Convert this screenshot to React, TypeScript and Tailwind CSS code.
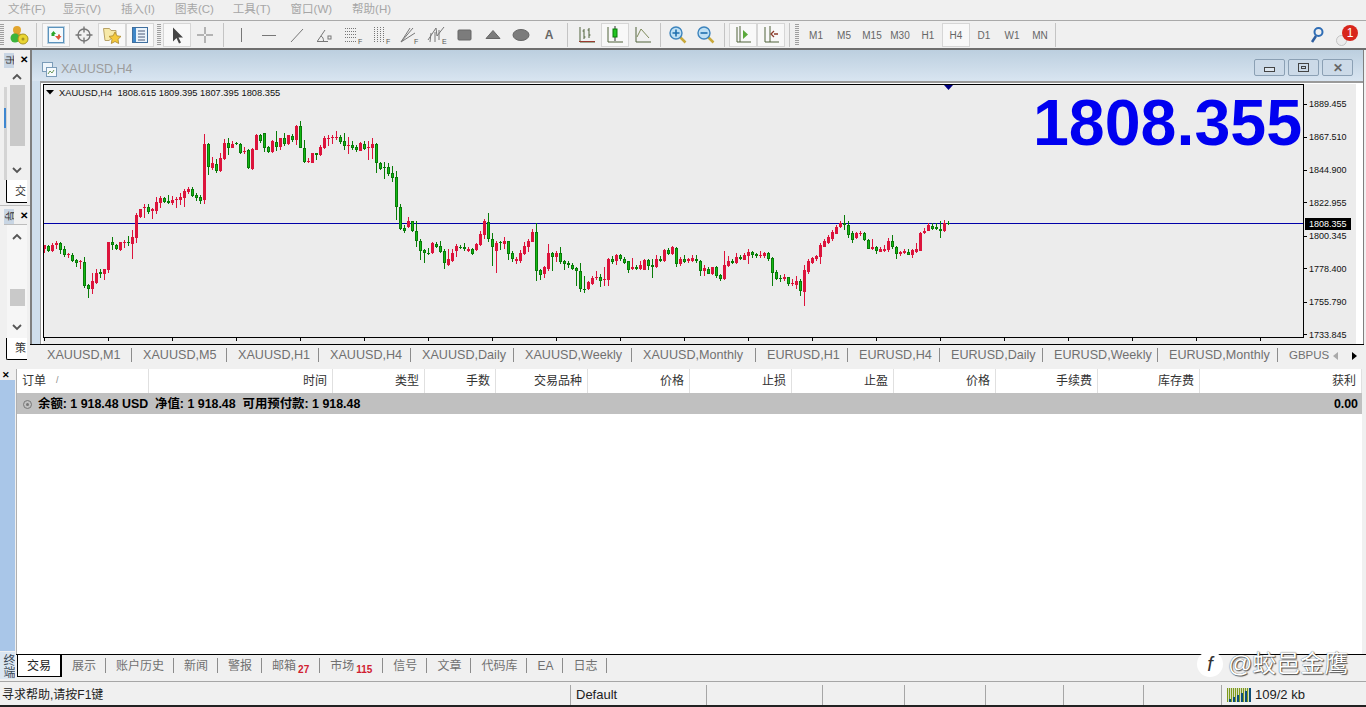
import type { ReactNode } from "react";

type C = [string, number, number, number, number];

// candle data read off the chart: colour, body top, body bottom, high, low (zoomed y, origin + y/3)
const seg1: C[] = [["r",406,418,404,428],["g",408,424,406,426],["r",404,424,400,428],["r",400,406,394,418],["g",398,420,396,432],["g",416,436,408,440],["r",432,436,428,444],["g",436,452,428,456],["g",450,458,446,470],["r",454,456,450,476],["g",456,528,442,534],["g",526,536,522,564],["r",514,536,490,552],["r",488,518,476,520],["g",486,492,476,504],["r",478,492,476,510],["r",396,480,396,490],["g",396,406,382,420],["g",406,418,402,420],["r",396,420,396,424],["r",396,398,390,414],["g",396,400,378,408],["r",382,402,360,446],["r",314,384,310,400],["r",298,320,296,322],["r",292,294,282,324],["g",292,306,282,312],["r",298,304,294,326],["r",276,302,262,314],["r",264,280,258,294],["g",264,276,260,278],["g",274,278,256,284],["r",270,280,258,286],["r",268,270,260,294],["r",260,270,248,284],["r",242,264,236,290],["r",236,246,230,250],["g",236,258,232,262],["g",254,264,250,274],["g",260,272,254,280],["r",102,270,72,282],["g",102,172,98,194],["r",160,174,142,182],["g",162,182,146,188],["r",144,184,130,186],["r",98,148,88,150],["g",98,114,84,134],["r",102,114,94,116],["g",100,102,96,104],
["g",102,128,98,130],["r",122,124,112,132],["g",120,174,116,176],["r",116,176,114,180],["r",74,120,72,120],["g",76,94,72,100],["g",70,114,68,124],["g",112,126,108,128],["r",94,126,90,128],["g",96,110,62,122],["r",84,110,84,120],["g",84,102,70,108],["r",76,102,74,104],["g",78,90,72,96],["r",48,90,44,104],["g",48,114,34,116],["g",114,156,90,158],["r",152,154,144,160],["r",130,158,128,158],["g",130,134,130,150],["r",110,136,104,138],["r",84,114,78,116],["r",84,86,76,108],["r",80,84,76,102],["r",82,84,64,90],["g",82,96,76,102],["g",94,108,68,120],["r",106,108,82,134],["g",106,114,94,122],["g",110,120,104,126],["r",100,122,96,124],["g",102,118,92,120],["r",110,114,92,150],["r",102,114,84,148],["g",102,160,98,188],["g",160,178,156,180],["g",170,174,156,206],["g",172,192,158,198],["g",190,204,168,216],["g",202,292,184,330],["g",292,356,282,360],["g",354,362,346,370],["r",334,352,322,354],["g",334,362,332,366],["g",362,394,334,412],["g",394,422,388,450],["g",420,428,416,458],["g",428,430,414,434],["r",400,430,396,432],["g",402,410,396,414]];
const seg2: C[] = [["g",468,486,454,490],["g",482,518,478,538],["r",508,524,478,530],["r",490,512,478,516],["r",468,484,462,500]];
const seg3: C[] = [["g",170,174,166,178],["g",172,178,160,184],["r",176,182,172,186],["g",178,192,174,194],["r",162,180,158,182],["r",132,164,122,166],["r",94,134,88,148],["g",96,146,68,156],["g",146,170,128,228],["r",158,182,154,250],["g",156,158,152,180],["r",152,162,142,178],["g",154,192,152,210],["g",188,208,184,218],["r",206,212,202,224],["r",188,214,180,218],["r",168,192,156,194],["r",152,172,146,186],["r",126,156,118,158],["g",126,242,100,274],["g",240,256,236,270],["r",232,252,228,264],["r",190,238,162,242],["g",190,200,186,244],["r",188,202,182,214],["g",188,216,170,220],["g",214,222,210,240],["g",220,226,212,232],["g",224,236,220,240],["g",234,244,230,288],["g",242,298,218,304],["g",296,298,258,308],["r",276,298,272,300],["r",264,282,258,286],["r",262,264,242,270],["g",262,272,252,290],["r",266,270,232,288],["r",206,270,204,288],["g",206,216,198,222],["r",196,212,192,224],["g",196,208,192,212],["g",206,218,200,222],["g",214,240,212,248],["r",232,238,204,240],["g",232,236,226,240],["r",226,238,212,240],["r",210,240,208,242],["g",210,228,206,240],["g",226,230,206,264],["r",206,232,194,234],["g",208,212,198,216],["r",180,212,178,216],["g",180,192,174,196],["r",172,192,168,196],["g",174,222,170,230],["r",206,222,200,226],["g",208,216,196,220],["r",208,214,204,218],["r",204,212,194,216],["g",208,214,196,220],["g",212,242,210,258],["r",234,242,224,256],["g",236,252,232,254],["r",232,252,230,254],["g",232,258,228,264],["g",256,268,252,274],["r",226,268,182,270],["r",214,228,198,232],["g",212,218,208,222],["r",202,218,190,222],["g",200,208,196,212],["r",194,210,190,212],["r",186,198,176,220],["g",186,196,182,202],["g",192,198,188,202],["r",194,198,184,206],["r",190,198,186,204],["g",190,206,186,212],["g",204,248,200,288],["g",246,266,240,270],["g",264,268,254,274],["r",260,266,252,274],["g",262,282,260,286],["r",278,282,268,288],["r",272,284,258,296],["g",272,304,268,318],["r",240,306,224,348],["r",214,246,206,250],["r",204,220,202,224],["r",198,206,194,212],["r",164,202,158,220],["r",152,170,148,172],["r",140,160,136,162],["r",126,148,120,152],["r",110,132,106,134],["r",100,112,94,114],["g",100,104,74,118],["g",104,134,94,146],["g",128,150,122,158],["r",130,144,126,148],["r",128,132,122,138],["g",128,150,126,154],["g",150,176,148,178],["r",170,176,148,180],["g",170,182,168,192],["r",176,186,172,188],["r",178,182,166,188],["r",152,180,144,186],["g",154,172,134,176],["g",170,192,168,208],["r",186,192,182,198],["r",184,188,178,192],["g",186,194,178,196],["r",180,194,176,204],["r",178,186,160,190],["r",128,182,126,184],["r",122,130,114,132],["r",106,122,100,124],["g",108,116,100,122],["g",110,118,100,120],["g",116,122,94,144],["r",98,124,90,126],["g",98,100,94,106]];

const candles: C[] = [
  ...seg1.map((c) => scale(c, 110)),
  ...seg2.map((c) => scale(c, 90)),
  ...seg3.map((c) => scale(c, 190)),
];

function scale(c: C, o: number): C {
  return [c[0], o + c[1] / 3, o + c[2] / 3, o + c[3] / 3, o + c[4] / 3];
}

const prices: [string, number][] = [["1889.455",103.5],["1867.510",136.5],["1844.900",169.5],["1822.955",202],["1800.345",235.5],["1778.400",268],["1755.790",301.5],["1733.845",334]];

function Chart() {
  const ticks = [];
  for (let x = 44; x < 1304; x += 64) ticks.push(x);
  return (
    <svg width={1313} height={260} viewBox="43 84 1313 260" shapeRendering="crispEdges" className="block">
      <rect x={43} y={84} width={1313} height={260} fill="#ececec" />
      <line x1={44} y1={223.5} x2={1304} y2={223.5} stroke="#0000a8" />
      {candles.map((c, i) => {
        const x = 44 + i * 4;
        const red = c[0] === "r";
        const h = Math.max(1, Math.round(c[2]) - Math.round(c[1]));
        return (
          <g key={i}>
            <rect x={x} y={Math.round(c[3])} width={1} height={Math.max(1, Math.round(c[4] - c[3]))} fill={red ? "#dc143c" : "#087c08"} />
            <rect x={x - 1} y={Math.round(c[1])} width={3} height={h} fill={red ? "#dc143c" : "#087c08"} />
            {!red && h > 2 && <rect x={x} y={Math.round(c[1]) + 1} width={1} height={h - 2} fill="#14b814" />}
          </g>
        );
      })}
      <rect x={43.5} y={84.5} width={1260} height={253} fill="none" stroke="#000" />
      {ticks.map((x) => <line key={x} x1={x + 0.5} y1={338} x2={x + 0.5} y2={341} stroke="#000" />)}
      {prices.map(([p, y]) => <line key={p} x1={1304} y1={Math.round(y) + 0.5} x2={1307} y2={Math.round(y) + 0.5} stroke="#000" />)}
      <path d="M944 85h9l-4.500 5z" fill="#000080" shapeRendering="auto" />
      <path d="M46 90h8l-4 4.500z" fill="#000" shapeRendering="auto" />
      <g fontFamily="'Liberation Sans',sans-serif" fontSize={9} fill="#111" shapeRendering="auto">
        <text x={59} y={95.500} fontSize={9.3} xmlSpace="preserve">XAUUSD,H4  1808.615 1809.395 1807.395 1808.355</text>
        {prices.map(([p, y]) => <text key={p} x={1309} y={y + 3.500}>{p}</text>)}
        <rect x={1305} y={218} width={46} height={12} fill="#000" />
        <text x={1309} y={227} fill="#fff">1808.355</text>
      </g>
    </svg>
  );
}

const G = ({ children, w = 20 }: { children: ReactNode; w?: number }) => (
  <svg width={w} height={20} viewBox="0 0 20 20" fill="none">{children}</svg>
);
const L = "#777";

function FLabel({ t }: { t: string }) {
  return <text x={15} y={19} fontSize={7} fill="#555" fontFamily="'Liberation Sans',sans-serif">{t}</text>;
}

const toolIcons: Record<string, ReactNode> = {
  chart: (
    <G>
      <rect x={2.500} y={2.500} width={15} height={15} fill="#f4fafd" stroke="#5b93bd" />
      <rect x={1.500} y={1.500} width={17} height={17} stroke="#b9cfdf" />
      <path d="M5 9l2.500-3L10 9H8.500v2h-3V9z" fill="#2aa52a" />
      <path d="M9 11h3V9.500h2V11h1.500L12.500 15z" fill="#e0563c" />
    </G>
  ),
  target: (
    <G>
      <circle cx={10} cy={10} r={6} stroke={L} strokeWidth={1.400} />
      <path d="M10 1.500v6M10 12.500v6M1.500 10h6M12.500 10h6" stroke={L} strokeWidth={1.400} />
    </G>
  ),
  star: (
    <G>
      <path d="M1.500 3.500h6l1.500 2h5v4l-7 6h-4z" fill="#f7e9a8" stroke="#b8a266" />
      <path d="M13 7l1.900 3.800 4.100.6-3 2.900.7 4.200-3.700-2-3.700 2 .7-4.200-3-2.900 4.100-.6z" fill="#f5c93c" stroke="#a9862a" strokeWidth={0.800} />
    </G>
  ),
  nav: (
    <G>
      <rect x={2.500} y={2.500} width={15} height={15} fill="#eaf3fb" stroke="#3f6f9f" />
      <rect x={3} y={3} width={3} height={14} fill="#3f87c8" />
      <path d="M8 6h7M8 9h7M8 12h7M8 15h7" stroke="#4c5a78" />
    </G>
  ),
  cursor: <G><path d="M6 2.500v14l3.500-3.500 2.500 5.500 2-1-2.500-5H16z" fill="#444" /></G>,
  cross: <G><path d="M10 2v7M10 11v7M2 10h7M11 10h7" stroke={L} /></G>,
  vline: <G><path d="M10.500 3v14" stroke={L} /></G>,
  hline: <G><path d="M3 10.500h14" stroke={L} /></G>,
  tline: <G><path d="M4 17L16 4" stroke={L} /></G>,
  angle: <G><path d="M2 16.500h11M2.500 16L10 5M6 11c2 1 2.500 3 2.500 5" stroke={L} /><rect x={13} y={11} width={3} height={3} stroke={L} /></G>,
  hfib: <G><path d="M2 3.500h11M2 6.500h11M2 9.500h11M2 12.500h11M2 16.500h11" stroke={L} strokeDasharray="1 1" /><FLabel t="F" /></G>,
  vfib: <G><path d="M3.500 2v15M6.500 2v15M9.500 2v15M12.500 2v15" stroke={L} strokeDasharray="1 1" /><FLabel t="F" /></G>,
  fan: <G><path d="M2 17L14 3M2 17l9-14M2 17l14-9" stroke={L} /><FLabel t="F" /></G>,
  elliot: <G><path d="M1 15L9 3l1 8 7-9M3 17L4 8M8 17V7M12 15V5" stroke={L} /><FLabel t="E" /></G>,
  rect: <G><rect x={3} y={5} width={13} height={10} rx={1} fill="#7c7c7c" stroke="#666" /></G>,
  tri: <G><path d="M10 5.500l7 8H3z" fill="#7c7c7c" stroke="#666" /></G>,
  ellipse: <G><ellipse cx={10} cy={10} rx={8} ry={5.500} fill="#7c7c7c" stroke="#666" /></G>,
  text: <span className="text-[12px] font-bold text-[#666]">A</span>,
  bars: <G><path d="M3 2v15h15M7 4v10M5.500 6H7M7 12h1.500M12 3v10M10.500 5H12M12 10h1.500" stroke="#50623a" /><path d="M2 16.500h16" stroke="#9a3b2f" /></G>,
  candle: <G><path d="M3 2v15h15" stroke="#50623a" /><path d="M10 1v15" stroke="#333" /><rect x={8} y={4} width={4} height={8} fill="#22c422" stroke="#0a7a0a" /></G>,
  line: <G><path d="M3 2v15h15" stroke="#50623a" /><path d="M4 12l4-8 8 9" stroke="#7e8a5a" /></G>,
  zin: (
    <G>
      <path d="M12 12l5.500 5.500" stroke="#c9a93a" strokeWidth={2.500} />
      <circle cx={8} cy={8} r={6} fill="#bfe0f4" stroke="#3d84bd" strokeWidth={1.400} />
      <path d="M8 4.500v7M4.500 8h7" stroke="#1f6fae" strokeWidth={1.600} />
    </G>
  ),
  zout: (
    <G>
      <path d="M12 12l5.500 5.500" stroke="#c9a93a" strokeWidth={2.500} />
      <circle cx={8} cy={8} r={6} fill="#bfe0f4" stroke="#3d84bd" strokeWidth={1.400} />
      <path d="M4.500 8h7" stroke="#1f6fae" strokeWidth={1.600} />
    </G>
  ),
  shift: <G><path d="M4 2v15h14" stroke="#50623a" /><path d="M7 1v16" stroke="#50623a" /><path d="M10 5l5 4.500-5 4.500z" fill="#5aa83a" /></G>,
  autos: <G><path d="M4 2v15h14" stroke="#50623a" /><path d="M9 1v16" stroke="#50623a" /><path d="M17 9h-4M13 6l-3 3 3 3" stroke="#8a3b2a" strokeWidth={1.300} /></G>,
};

function Tool({ icon, on }: { icon: string; on?: boolean }) {
  return (
    <div className={on ? "flex h-[24px] w-[28px] items-center justify-center border border-[#d6d6d6] bg-[#f8f8f8]" : "flex h-[24px] w-[28px] items-center justify-center"}>
      {toolIcons[icon]}
    </div>
  );
}

const Sep = () => <div className="h-[24px] w-px bg-[#c4c4c4]" />;
const Grip = () => <div className="h-[22px] w-[4px] bg-[repeating-linear-gradient(#9f9f9f_0_1px,#f0f0f0_1px_2px)]" />;

function Menu() {
  const items = [["文件(F)", "ml-[8px]"], ["显示(V)", "ml-[17px]"], ["插入(I)", "ml-[20px]"], ["图表(C)", "ml-[20px]"], ["工具(T)", "ml-[19px]"], ["窗口(W)", "ml-[20px]"], ["帮助(H)", "ml-[20px]"]];
  return (
    <div className="flex h-[21px] items-center border-b border-[#a9a9a9] pb-[1px] text-[11.5px] text-[#a6a6a6]">
      {items.map(([t, c]) => <span key={t} className={c}>{t}</span>)}
    </div>
  );
}

function Toolbar() {
  const periods = ["M1", "M5", "M15", "M30", "H1", "H4", "D1", "W1", "MN"];
  return (
    <div className="flex h-[27px] items-center pt-[1px]">
      <div className="mr-[1px]"><Grip /></div>
      <div className="flex w-[28px] items-center justify-center">
        <svg width={22} height={22} viewBox="0 0 22 22">
          <circle cx={9} cy={6} r={4} fill="#e2a52e" />
          <path d="M3 15c0-5 3-6 6-6s6 1 6 6z" fill="#d49a26" />
          <circle cx={7} cy={14} r={4.500} fill="#3cb43c" />
          <circle cx={15} cy={15} r={5} fill="#e9d532" stroke="#a89420" />
          <circle cx={15} cy={15} r={1.500} fill="#a89420" />
        </svg>
      </div>
      <div className="ml-[3px] mr-[5px]"><Sep /></div>
      <Tool icon="chart" on /><Tool icon="target" /><Tool icon="star" on /><Tool icon="nav" on />
      <div className="ml-[3px] mr-[2px]"><Grip /></div>
      <Tool icon="cursor" on /><Tool icon="cross" />
      <div className="ml-[4px] mr-[3px]"><Sep /></div>
      {["vline", "hline", "tline", "angle", "hfib", "vfib", "fan", "elliot", "rect", "tri", "ellipse", "text"].map((k) => <Tool key={k} icon={k} />)}
      <div className="ml-[4px] mr-[5px]"><Sep /></div>
      <Tool icon="bars" /><Tool icon="candle" on /><Tool icon="line" />
      <div className="ml-[3px] mr-[3px]"><Sep /></div>
      <Tool icon="zin" /><Tool icon="zout" />
      <div className="ml-[4px] mr-[4px]"><Sep /></div>
      <Tool icon="shift" on /><Tool icon="autos" on />
      <div className="ml-[4px] mr-[5px]"><Sep /></div>
      <Grip />
      <div className="w-[3px]" />
      {periods.map((p) => (
        <div key={p} className={p === "H4" ? "flex h-[24px] w-[28px] items-center justify-center border border-[#d6d6d6] bg-[#f8f8f8] text-[10px] text-[#666]" : "flex h-[24px] w-[28px] items-center justify-center text-[10px] text-[#666]"}>{p}</div>
      ))}
      <div className="ml-[1px]"><Sep /></div>
      <div className="flex-1" />
      <svg width={16} height={18} viewBox="0 0 16 18" fill="none" className="mr-[11px]">
        <circle cx={9.500} cy={6} r={4} stroke="#2f6db5" strokeWidth={2} />
        <path d="M7 10l-4 6" stroke="#2f5f9f" strokeWidth={2.500} />
      </svg>
      <div className="relative mr-[8px] h-[22px] w-[22px]">
        <div className="absolute bottom-0 left-0 h-[11px] w-[11px] rounded-full border border-[#c4c4c4] bg-[#ececec]" />
        <div className="absolute right-0 top-[1px] flex h-[16px] w-[16px] items-center justify-center rounded-full bg-[#d8261c] text-[12px] leading-none text-white">1</div>
      </div>
    </div>
  );
}

const Chevron = ({ up }: { up?: boolean }) => (
  <svg width={10} height={7} viewBox="0 0 10 7" fill="none">
    <path d={up ? "M1 6l4-4 4 4" : "M1 1l4 4 4-4"} stroke="#555" strokeWidth={1.800} />
  </svg>
);

function DockHead({ t }: { t: string }) {
  return (
    <div className="flex h-[16px] items-center pl-[4px]">
      <span className="flex h-[15px] w-[10px] items-center justify-center overflow-hidden bg-[#c9d6e4] text-[10px] leading-none text-[#333]"><span className="rotate-90">{t}</span></span>
      <span className="ml-[6px] text-[10px] font-bold leading-none text-black">✕</span>
    </div>
  );
}

function Docks() {
  return (
    <div className="flex w-[30px] flex-col pt-[2px]">
      <DockHead t="市" />
      <div className="ml-[4px] flex h-[112px] w-[23px]">
        <div className="mt-[19px] h-[93px] w-[3px] bg-[#d4d4d4]"><div className="mt-[21px] h-[20px] w-[2px] bg-[#3f87d0]" /></div>
        <div className="flex flex-1 flex-col items-center">
          <div className="mt-[5px]"><Chevron up /></div>
          <div className="mt-[5px] h-[61px] w-[15px] bg-[#c9c9c9]" />
          <div className="mt-[21px]"><Chevron /></div>
        </div>
      </div>
      <div className="ml-[6px] h-[23px] w-[21px] rounded-bl-[2px] border-b border-l border-black bg-white pl-[8px] pt-[4px] text-[11px] leading-[14px] text-[#333]">交</div>
      <div className="h-[2px]" />
      <div className="h-[1px] bg-[#bdbdbd]" />
      <div className="h-[2px]" />
      <DockHead t="导" />
      <div className="ml-[4px] flex h-[114px] w-[23px] border-t border-[#bdbdbd]">
        <div className="w-[3px] bg-[#f0f0f0]" />
        <div className="flex flex-1 flex-col items-center bg-[#f6f6f6]">
          <div className="mt-[8px]"><Chevron up /></div>
          <div className="mt-[49px] h-[17px] w-[15px] bg-[#c9c9c9]" />
          <div className="mt-[18px]"><Chevron /></div>
        </div>
      </div>
      <div className="ml-[6px] h-[22px] w-[21px] rounded-bl-[2px] border-b border-l border-black bg-white pl-[8px] pt-[3px] text-[11px] leading-[14px] text-[#333]">策</div>
    </div>
  );
}

function WinBtn({ children }: { children: ReactNode }) {
  return <div className="flex h-[17px] w-[31px] items-center justify-center rounded-[2px] border border-[#8ba0b4] bg-[#ccdae8]">{children}</div>;
}

function ChartWindow() {
  return (
    <div className="flex h-[294px] flex-col border-l-2 border-r border-t-0 border-[#7f7f7f] bg-[#cfdeec]">
      <div className="flex h-[31px] items-center bg-linear-to-b from-[#bccfdf] to-[#d9e5f1] pl-[10px]">
        <svg width={15} height={15} viewBox="0 0 15 15" fill="none" className="mt-[7px]">
          <rect x={0.500} y={0.500} width={10} height={9} fill="#eef5fb" stroke="#7b9cb8" />
          <rect x={4.500} y={5.500} width={10} height={9} fill="#f6fafd" stroke="#7b9cb8" />
          <path d="M6 12l2-3 2 2 2-3" stroke="#6f9a5a" />
        </svg>
        <span className="ml-[4px] mt-[8px] text-[12.5px] text-[#9c9c9c]">XAUUSD,H4</span>
        <div className="flex-1" />
        <div className="mr-[10px] mt-[4px] flex gap-[3px]">
          <WinBtn><div className="mt-[4px] h-[5px] w-[11px] border border-[#444] bg-[#dde6ef]" /></WinBtn>
          <WinBtn><div className="flex h-[9px] w-[11px] items-center justify-center border border-[#444]"><div className="h-[3px] w-[5px] border border-[#444]" /></div></WinBtn>
          <WinBtn><span className="text-[12px] font-bold leading-none text-[#666]">✕</span></WinBtn>
        </div>
      </div>
      <div className="relative ml-[8px] flex flex-1 flex-col border-l border-t-2 border-[#9a9a9a] bg-white pl-[2px] pt-[1px]">
        <Chart />
        <div className="absolute left-[992px] top-[2px] text-[64.5px] font-bold leading-[76px] text-[#0000f0]">1808.355</div>
      </div>
    </div>
  );
}

const docTabs = [
  ["XAUUSD,M1", "w-[96px]"], ["XAUUSD,M5", "w-[95px]"], ["XAUUSD,H1", "w-[92px]"], ["XAUUSD,H4", "w-[92px]"],
  ["XAUUSD,Daily", "w-[103px]"], ["XAUUSD,Weekly", "w-[118px]"], ["XAUUSD,Monthly", "w-[124px]"], ["EURUSD,H1", "w-[92px]"],
  ["EURUSD,H4", "w-[92px]"], ["EURUSD,Daily", "w-[103px]"], ["EURUSD,Weekly", "w-[115px]"], ["EURUSD,Monthly", "w-[120px]"],
];

function DocTabs() {
  return (
    <div className="flex h-[23px] items-center border-t border-black pb-[1px] pl-[6px] text-[12.6px] text-[#707070]">
      {docTabs.map(([t, w]) => (
        <div key={t} className={`flex items-center justify-between pl-[11px] ${w}`}>
          <span className="whitespace-nowrap">{t}</span>
          <div className="h-[14px] w-px bg-[#8c8c8c]" />
        </div>
      ))}
      <span className="ml-[11px] w-[39px] whitespace-nowrap text-[11.5px]">GBPUS</span>
      <svg width={5} height={8} viewBox="0 0 5 8" className="ml-[5px]"><path d="M5 0v8L0 4z" fill="#aaa" /></svg>
      <svg width={5} height={8} viewBox="0 0 5 8" className="ml-[14px]"><path d="M0 0v8l5-4z" fill="#000" /></svg>
    </div>
  );
}

const cols = [
  ["时间", "w-[184px]"], ["类型", "w-[92px]"], ["手数", "w-[71px]"], ["交易品种", "w-[92px]"], ["价格", "w-[102px]"], ["止损", "w-[102px]"],
  ["止盈", "w-[102px]"], ["价格", "w-[102px]"], ["手续费", "w-[102px]"], ["库存费", "w-[102px]"], ["获利", "w-[162px]"],
];

const termTabs: [string, string?][] = [["展示"], ["账户历史"], ["新闻"], ["警报"], ["邮箱", "27"], ["市场", "115"], ["信号"], ["文章"], ["代码库"], ["EA"], ["日志"]];

function Terminal() {
  return (
    <div className="flex h-[314px]">
      <div className="flex w-[16px] flex-col">
        <div className="h-[13px] pl-[2px] pt-[4px] text-[9px] font-bold leading-none text-black">✕</div>
        <div className="w-[15px] flex-1 bg-[#a9c6e8]" />
        <div className="mb-[2px] mt-[1px] flex h-[27px] w-[15px] items-center justify-center overflow-hidden bg-[#dbe6f1] text-[12px] leading-[13px] text-[#3c4a58] [writing-mode:vertical-rl]">终端</div>
      </div>
      <div className="flex flex-1 flex-col">
        <div className="ml-0 mr-[4px] mt-[2px] flex h-[285px] flex-col border-l border-[#b0b0b0] bg-white">
          <div className="flex h-[24px] items-center text-[12px] text-[#333]">
            <div className="flex h-full w-[132px] items-center border-r border-[#e0e0e0] pl-[5px]">订单<span className="ml-[10px] text-[9px] text-[#888]">/</span></div>
            {cols.map(([t, w], i) => (
              <div key={i} className={`flex h-full items-center justify-end border-r border-[#e0e0e0] pr-[5px] ${w}`}>{t}</div>
            ))}
          </div>
          <div className="flex h-[21px] items-center bg-[#c0c0c0] pl-[6px] pr-[4px] pt-[1px] text-[12.4px] font-bold text-black">
            <div className="flex h-[9px] w-[9px] items-center justify-center rounded-full border border-[#777]"><div className="h-[3px] w-[3px] rounded-full bg-[#777]" /></div>
            <span className="ml-[6px] whitespace-pre">余额: 1 918.48 USD  净值: 1 918.48  可用预付款: 1 918.48</span>
            <span className="ml-auto">0.00</span>
          </div>
        </div>
        <div className="relative flex h-[27px] items-start border-t border-black pl-[1px] text-[12px] text-[#707070]">
          <div className="-mt-[1px] flex h-[23px] w-[45px] items-center justify-center border border-r-2 border-black bg-white text-[#222]">交易</div>
          {termTabs.map(([t, n]) => (
            <div key={t} className="flex h-[21px] items-center">
              <span className="pl-[10px] pr-[9px]">{t}{n && <span className="relative top-[3px] ml-[2px] mr-[1px] text-[10px] font-bold text-[#d02030]">{n}</span>}</span>
              <div className="h-[15px] w-px bg-[#8c8c8c]" />
            </div>
          ))}
        </div>
      </div>
    </div>
  );
}

function StatusBar() {
  const cells = ["w-[136px]", "w-[116px]", "w-[82px]", "w-[81px]", "w-[78px]", "w-[80px]", "w-[78px]"];
  return (
    <div className="flex h-[24px] items-center border-t border-[#a6a6a6] pt-[2px] text-[12px] text-[#222]">
      <div className="w-[570px] pl-[2px]">寻求帮助,请按F1键</div>
      {cells.map((w, i) => (
        <div key={i} className={`flex h-[20px] items-center border-l border-[#a6a6a6] pl-[5px] text-[13px] ${w}`}>{i === 0 ? "Default" : ""}</div>
      ))}
      <div className="flex h-[20px] flex-1 items-center border-l border-[#a6a6a6] pl-[5px]">
        <svg width={24} height={14} viewBox="0 0 24 14" shapeRendering="crispEdges">
          <rect width={24} height={14} fill="#7d9a1c" />
          <path d="M1 0v14M3 0v14M5 0v14M7 0v14M9 0v14M11 0v14M13 0v14M15 0v14M17 0v14M19 0v14M21 0v14M23 0v14" stroke="#f0f0f0" strokeWidth={0.800} />
          <path d="M0 14h2v-3h2v3h2v-5h2v5h2v-7h2v7h2v-9h2v9h2v-11h2v11h2V0h2v14z" fill="#0d4f7a" />
        </svg>
        <span className="ml-[4px] text-[13px]">109/2 kb</span>
      </div>
    </div>
  );
}

export default function App() {
  return (
    <div className="relative flex h-[707px] w-[1366px] flex-col overflow-hidden bg-[#f0f0f0] font-['Liberation_Sans','Noto_Sans_CJK_SC',sans-serif]">
      <Menu />
      <Toolbar />
      <div className="flex h-[319px] border-t-2 border-[#6e6e6e]">
        <Docks />
        <div className="flex w-[1334px] flex-col">
          <ChartWindow />
          <DocTabs />
        </div>
        <div className="flex-1" />
      </div>
      <Terminal />
      <StatusBar />
      <div className="h-[2px] bg-[#222]" />
      <div className="absolute left-[1197px] top-[649px] flex items-center gap-[5px] text-[24px] leading-[30px] text-white [text-shadow:0_0_1px_#333,1px_1px_1px_#555]">
        <div className="flex h-[26px] w-[26px] items-center justify-center rounded-full bg-white text-[20px] italic text-[#333] [text-shadow:none]">f</div>
        <span>@蛟邑金鹰</span>
      </div>
    </div>
  );
}
